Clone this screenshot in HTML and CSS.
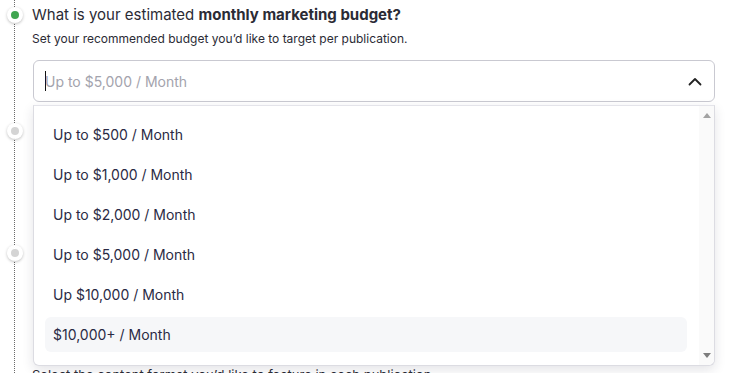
FILE: index.html
```html
<!DOCTYPE html>
<html>
<head>
<meta charset="utf-8">
<link rel="stylesheet" href="styles.css">
</head>
<body>
<div class="steps">
  <div class="step step-active">
    <span class="dot dot-green"></span>
    <div class="step-body">
      <h2 class="q">What is your estimated <b>monthly marketing budget?</b></h2>
      <p class="hint">Set your recommended budget you’d like to target per publication.</p>
      <div class="select">
        <div class="select-field">
          <span class="caret"></span>
          <span class="placeholder">Up to $5,000 / Month</span>
          <svg class="chev" width="14" height="9" viewBox="0 0 14 9"><path d="M1.5 7.5 L7 2 L12.5 7.5" fill="none" stroke="#222" stroke-width="1.8" stroke-linecap="round" stroke-linejoin="round"/></svg>
        </div>
        <div class="menu">
          <ul class="options">
            <li class="opt">Up to $500 / Month</li>
            <li class="opt">Up to $1,000 / Month</li>
            <li class="opt">Up to $2,000 / Month</li>
            <li class="opt">Up to $5,000 / Month</li>
            <li class="opt">Up $10,000 / Month</li>
            <li class="opt opt-hover">$10,000+ / Month</li>
          </ul>
          <div class="scrollbar">
            <span class="arr arr-up"></span>
            <span class="arr arr-down"></span>
          </div>
        </div>
      </div>
    </div>
  </div>
  <div class="step">
    <span class="dot"></span>
    <div class="step-body"></div>
  </div>
  <div class="step">
    <span class="dot"></span>
    <div class="step-body">
      <p class="hint under">Select the content format you’d like to feature in each publication.</p>
    </div>
  </div>
</div>
</body>
</html>
```
FILE: styles.css
```css
* { box-sizing: border-box; }
html, body { margin: 0; padding: 0; background: #fff; }
body {
  font-family: "Inter", "Lato", "Noto Sans", sans-serif;
  color: #2a2a3c;
  width: 730px;
  height: 373px;
  overflow: hidden;
}
.steps {
  position: relative;
  padding: 0 15px 0 0;
  height: 373px;
}
.steps::before {
  content: "";
  position: absolute;
  left: 14px;
  top: 0;
  bottom: 0;
  border-left: 1px dotted #6b6b6b;
}
.step {
  position: relative;
  display: flex;
  align-items: flex-start;
  gap: 9px;
  padding-left: 7px;
  height: 116px;
}
.step + .step { height: 122px; }
.dot {
  position: relative;
  flex: 0 0 16px;
  width: 16px;
  height: 16px;
  margin-top: 7px;
  border-radius: 50%;
  background: #fff;
  box-shadow: 0 1px 3px rgba(0,0,0,.25);
}
.dot::after {
  content: "";
  position: absolute;
  left: 4px; top: 4px;
  width: 8px; height: 8px;
  border-radius: 50%;
  background: #d4d4d4;
}
.dot-green::after { background: #3fa550; }
.step-body { flex: 1; min-width: 0; }
.q {
  margin: 5px 0 0 0;
  font-size: 15px;
  line-height: 20px;
  font-weight: 400;
  color: #2b2b35;
}
.q b { font-weight: 700; }
.hint {
  margin: 6px 0 0 0;
  font-size: 12px;
  line-height: 16px;
  color: #2b2b35;
}
.select {
  position: relative;
  margin-top: 13px;
  margin-left: 1px;
}
.select-field {
  display: flex;
  align-items: center;
  height: 42px;
  border: 1px solid #c9c9d1;
  border-radius: 6px;
  padding: 0 12px 0 11px;
  font-size: 14px;
}
.caret {
  width: 1px;
  height: 20px;
  background: #111;
  margin-right: -1px;
}
.placeholder {
  flex: 1;
  color: #a3a3ad;
}
.chev { display: block; }
.menu {
  position: absolute;
  left: 0;
  right: 0;
  top: 45px;
  height: 261px;
  display: flex;
  background: #fff;
  border: 1px solid #dcdce2;
  border-top-color: #e4e4ea;
  border-radius: 0 0 6px 6px;
  box-shadow: 0 4px 12px rgba(30,30,60,.12);
  z-index: 5;
}
.options {
  list-style: none;
  margin: 0;
  padding: 11px 12px 0 11px;
  flex: 1;
  display: flex;
  flex-direction: column;
  gap: 5px;
}
.opt {
  height: 35px;
  line-height: 35px;
  padding-left: 8px;
  font-size: 14px;
  color: #2a2a44;
  border-radius: 6px;
}
.opt-hover { background: #f6f7f9; }
.scrollbar {
  flex: 0 0 15px;
  background: #fafafa;
  display: flex;
  flex-direction: column;
  justify-content: space-between;
  align-items: center;
  padding: 7px 0 7px;
  border-bottom-right-radius: 6px;
}
.arr {
  width: 0; height: 0;
  border-left: 4px solid transparent;
  border-right: 4px solid transparent;
}
.arr-up { border-bottom: 5px solid #a3a3a3; }
.arr-down { border-top: 5px solid #7d7d7d; }
.under { margin-top: 129px; font-size: 13px; }
```
